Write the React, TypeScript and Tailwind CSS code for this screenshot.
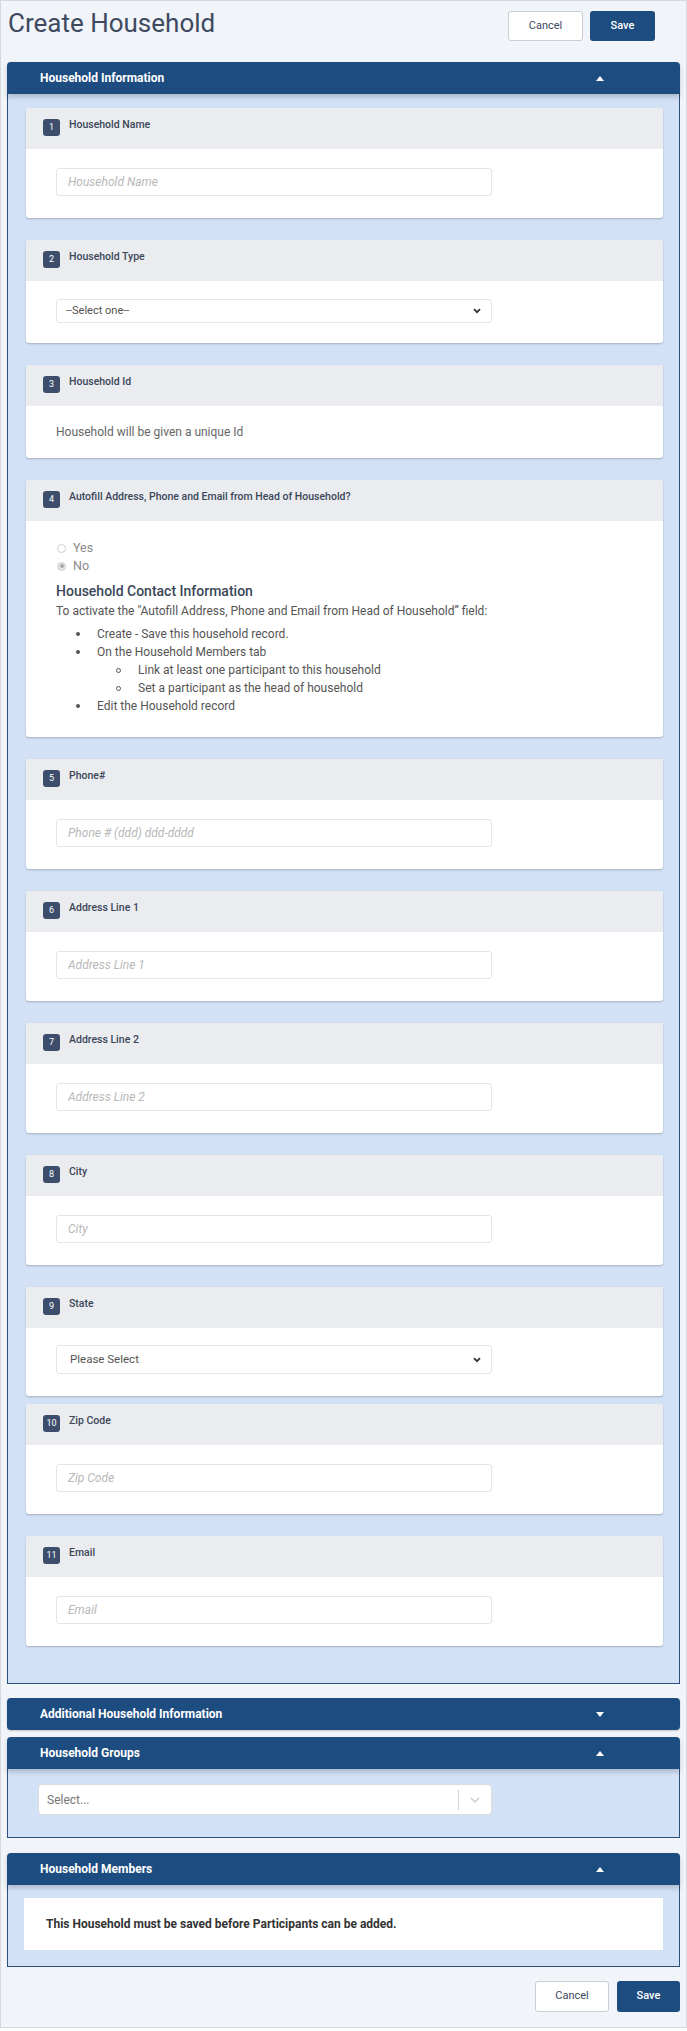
import { ReactNode } from "react";

const Caret = ({ up = true }: { up?: boolean }) => (
  <svg width="8" height="5" viewBox="0 0 8 5" className="block">
    {up ? <path d="M0 5L4 0L8 5Z" fill="#fff" /> : <path d="M0 0L4 5L8 0Z" fill="#fff" />}
  </svg>
);

const Chevron = () => (
  <svg width="8" height="6" viewBox="0 0 8 6" className="block">
    <path d="M1 1.2L4 4.2L7 1.2" fill="none" stroke="#333" strokeWidth="1.8" />
  </svg>
);

const PanelHeader = ({
  title,
  up = true,
  open = true,
}: {
  title: string;
  up?: boolean;
  open?: boolean;
}) => (
  <div
    className={`relative z-10 flex h-[32px] items-center justify-between bg-[#1d4c80] pl-[33px] pr-[76px] text-[12px] font-bold text-white ${
      open
        ? "rounded-t-[4px] shadow-[0_3px_5px_rgba(0,0,0,0.18)]"
        : "rounded-[4px] shadow-[0_1px_2px_rgba(0,0,0,0.2)]"
    }`}
  >
    <span>{title}</span>
    <Caret up={up} />
  </div>
);

const FieldCard = ({
  n,
  label,
  children,
}: {
  n: number;
  label: string;
  children: ReactNode;
}) => (
  <div className="overflow-hidden rounded-[3px] bg-white shadow-[0_1px_2px_rgba(0,0,0,0.22)]">
    <div className="flex h-[41px] items-start gap-[9px] bg-[#eaecef] pl-[17px]">
      <div className="mt-[11px] flex h-[17px] w-[17px] items-center justify-center rounded-[3px] bg-[#3c4e6b] text-[9px] text-white">
        {n}
      </div>
      <div className="mt-[10px] text-[10.5px] font-medium leading-[14px] text-[#3b4759]">
        {label}
      </div>
    </div>
    {children}
  </div>
);

const TextField = ({ placeholder }: { placeholder: string }) => (
  <div className="px-[30px] pb-[22px] pt-[19px]">
    <input
      placeholder={placeholder}
      className="block h-[28px] w-[436px] rounded-[3px] border border-[#e3e5e8] bg-white px-[11px] text-[12px] outline-none placeholder:italic placeholder:text-[#b8b8b8]"
    />
  </div>
);

const Bullet = ({ children }: { children: ReactNode }) => (
  <div className="flex h-[18px] items-center pl-[20px]">
    <div className="h-[4px] w-[4px] rounded-full bg-[#555]" />
    <span className="ml-[17px]">{children}</span>
  </div>
);

const SubBullet = ({ children }: { children: ReactNode }) => (
  <div className="flex h-[18px] items-center pl-[60px]">
    <div className="h-[5px] w-[5px] rounded-full border border-[#555]" />
    <span className="ml-[17px]">{children}</span>
  </div>
);

const App = () => {
  return (
    <div className="h-[2028px] w-[687px] border border-[#d5d9de] bg-[#f1f4f8] font-['Roboto',sans-serif]">
      <div className="flex items-start justify-between pl-[7px] pr-[31px] pt-[10px]">
        <h1 className="-mt-[3px] text-[26px] leading-[30px] text-[#3e4a5f]">
          Create Household
        </h1>
        <div className="flex gap-[7px]">
          <button className="h-[30px] w-[75px] rounded-[3px] border border-[#c9ced4] bg-white text-[11px] text-[#3e4a5f]">
            Cancel
          </button>
          <button className="h-[30px] w-[65px] rounded-[3px] bg-[#1d4c80] text-[11px] font-medium text-white">
            Save
          </button>
        </div>
      </div>

      <div className="ml-[6px] mt-[21px] w-[673px]">
        <PanelHeader title="Household Information" />
        <div className="border border-t-0 border-[#2b507c] bg-[#d3e1f6] pb-[37px] pl-[18px] pr-[16px] pt-[14px]">
          <div className="flex flex-col gap-[22px]">
            <FieldCard n={1} label="Household Name">
              <TextField placeholder="Household Name" />
            </FieldCard>

            <FieldCard n={2} label="Household Type">
              <div className="px-[30px] pb-[20px] pt-[18px]">
                <div className="flex h-[24px] w-[436px] items-center justify-between rounded-[3px] border border-[#e3e5e8] pl-[9px] pr-[10px] text-[11px] text-[#555]">
                  <span>--Select one--</span>
                  <Chevron />
                </div>
              </div>
            </FieldCard>

            <FieldCard n={3} label="Household Id">
              <div className="flex h-[52px] items-center px-[30px] text-[12px] text-[#666]">
                Household will be given a unique Id
              </div>
            </FieldCard>

            <FieldCard n={4} label="Autofill Address, Phone and Email from Head of Household?">
              <div className="px-[30px] pb-[22px] pt-[18px] text-[12px] text-[#555]">
                <div className="flex h-[18px] items-center gap-[7px] pl-[1px] text-[12.5px] text-[#8a8a8a]">
                  <div className="h-[9px] w-[9px] rounded-full border border-[#cfcfcf] bg-white" />
                  <span>Yes</span>
                </div>
                <div className="flex h-[18px] items-center gap-[7px] pl-[1px] text-[12.5px] text-[#8a8a8a]">
                  <div className="flex h-[9px] w-[9px] items-center justify-center rounded-full border border-[#cfcfcf] bg-[#e6e6e6]">
                    <div className="h-[4px] w-[4px] rounded-full bg-[#a8a8a8]" />
                  </div>
                  <span>No</span>
                </div>
                <div className="mt-[6px] text-[14px] font-medium leading-[20px] text-[#3b4759]">
                  Household Contact Information
                </div>
                <div className="mt-[1px] leading-[18px]">
                  To activate the "Autofill Address, Phone and Email from Head of Household” field:
                </div>
                <div className="mt-[5px]">
                  <Bullet>Create - Save this household record.</Bullet>
                  <Bullet>On the Household Members tab</Bullet>
                  <SubBullet>Link at least one participant to this household</SubBullet>
                  <SubBullet>Set a participant as the head of household</SubBullet>
                  <Bullet>Edit the Household record</Bullet>
                </div>
              </div>
            </FieldCard>

            <FieldCard n={5} label="Phone#">
              <TextField placeholder="Phone # (ddd) ddd-dddd" />
            </FieldCard>
            <FieldCard n={6} label="Address Line 1">
              <TextField placeholder="Address Line 1" />
            </FieldCard>
            <FieldCard n={7} label="Address Line 2">
              <TextField placeholder="Address Line 2" />
            </FieldCard>
            <FieldCard n={8} label="City">
              <TextField placeholder="City" />
            </FieldCard>

            <div className="flex flex-col gap-[8px]">
              <FieldCard n={9} label="State">
                <div className="px-[30px] pb-[22px] pt-[17px]">
                  <div className="flex h-[29px] w-[436px] items-center justify-between rounded-[3px] border border-[#e3e5e8] pl-[13px] pr-[10px] text-[11.5px] text-[#555]">
                    <span>Please Select</span>
                    <Chevron />
                  </div>
                </div>
              </FieldCard>
              <FieldCard n={10} label="Zip Code">
                <TextField placeholder="Zip Code" />
              </FieldCard>
            </div>

            <FieldCard n={11} label="Email">
              <TextField placeholder="Email" />
            </FieldCard>
          </div>
        </div>

        <div className="mt-[14px]">
          <PanelHeader title="Additional Household Information" up={false} open={false} />
        </div>

        <div className="mt-[7px]">
          <PanelHeader title="Household Groups" />
          <div className="border border-t-0 border-[#2b507c] bg-[#d3e1f6] pb-[22px] pl-[30px] pt-[15px]">
            <div className="flex h-[31px] w-[454px] items-center rounded-[4px] border border-[#dcdcdc] bg-white pl-[8px] text-[12px] text-[#777]">
              <span className="flex-1">Select...</span>
              <div className="h-[20px] w-px bg-[#d4d4d4]" />
              <div className="flex w-[32px] justify-center">
                <svg width="10" height="6" viewBox="0 0 10 6" className="block">
                  <path d="M1 1L5 5L9 1" fill="none" stroke="#c4c4c4" strokeWidth="1.2" />
                </svg>
              </div>
            </div>
          </div>
        </div>

        <div className="mt-[15px]">
          <PanelHeader title="Household Members" />
          <div className="border border-t-0 border-[#2b507c] bg-[#d3e1f6] px-[16px] pb-[16px] pt-[13px]">
            <div className="flex h-[52px] items-center bg-white pl-[22px] text-[12px] font-bold text-[#333]">
              This Household must be saved before Participants can be added.
            </div>
          </div>
        </div>
      </div>

      <div className="mt-[14px] flex justify-end gap-[8px] pr-[6px]">
        <button className="h-[31px] w-[74px] rounded-[3px] border border-[#c9ced4] bg-white text-[11px] text-[#3e4a5f]">
          Cancel
        </button>
        <button className="h-[31px] w-[63px] rounded-[3px] bg-[#1d4c80] text-[11px] font-medium text-white">
          Save
        </button>
      </div>
    </div>
  );
};

export default App;
